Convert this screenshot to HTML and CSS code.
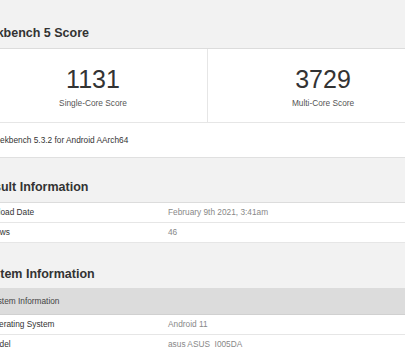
FILE: index.html
```html
<!DOCTYPE html>
<html lang="en">
<head>
    <meta charset="UTF-8">
    <meta name="viewport" content="width=device-width, initial-scale=1.0">
    <title>Geekbench 5 Result</title>
    <link rel="stylesheet" href="styles.css">
</head>
<body>
    <div class="page">
        <h2 class="section-title first">Geekbench 5 Score</h2>
        <div class="card">
            <div class="scores">
                <div class="score">
                    <div class="score-value">1131</div>
                    <div class="score-label">Single-Core Score</div>
                </div>
                <div class="score">
                    <div class="score-value">3729</div>
                    <div class="score-label">Multi-Core Score</div>
                </div>
            </div>
            <div class="version">Geekbench 5.3.2 for Android AArch64</div>
        </div>

        <h2 class="section-title">Result Information</h2>
        <div class="table">
            <div class="row"><span class="name">Upload Date</span><span class="value">February 9th 2021, 3:41am</span></div>
            <div class="row"><span class="name">Views</span><span class="value">46</span></div>
        </div>

        <h2 class="section-title third">System Information</h2>
        <div class="table">
            <div class="row head"><span class="name">System Information</span><span class="value"></span></div>
            <div class="row"><span class="name">Operating System</span><span class="value">Android 11</span></div>
            <div class="row"><span class="name">Model</span><span class="value">asus ASUS_I005DA</span></div>
        </div>
    </div>
</body>
</html>
```

FILE: styles.css
```css
body {
    margin: 0;
    background-color: #f2f2f2;
    font-family: "Liberation Sans", Arial, sans-serif;
    color: #333;
    overflow: hidden;
}

.page {
    margin-left: -22px;
    width: 460px;
}

.section-title {
    margin: 0;
    padding: 22px 0 8px;
    font-size: 12.5px;
    line-height: 14px;
    font-weight: bold;
    color: #333;
}

.section-title.first {
    padding-top: 26px;
    margin-left: -5px;
}

.section-title.third {
    padding-top: 24px;
    padding-bottom: 7px;
}

.card {
    background: #fff;
    border-top: 1px solid #dcdcdc;
    border-bottom: 1px solid #e0e0e0;
    border-left: 1px solid #e0e0e0;
}

.scores {
    display: grid;
    grid-template-columns: 228px 1fr;
    border-bottom: 1px solid #e6e6e6;
}

.score {
    text-align: center;
    padding: 16px 0 13px;
}

.score + .score {
    border-left: 1px solid #e6e6e6;
}

.score-value {
    font-size: 25px;
    line-height: 28px;
    color: #333;
}

.score-label {
    margin-top: 4px;
    font-size: 8.3px;
    line-height: 12px;
    color: #555;
}

.version {
    padding: 0 10px;
    font-size: 8.3px;
    line-height: 34px;
    color: #333;
}

.table {
    background: #fff;
    border-top: 1px solid #dcdcdc;
    border-left: 1px solid #e0e0e0;
}

.row {
    display: grid;
    grid-template-columns: 180px 1fr;
    padding: 0 9px;
    height: 19px;
    line-height: 19px;
    font-size: 8.3px;
    border-bottom: 1px solid #e6e6e6;
}

.row .name {
    color: #333;
}

.row .value {
    color: #888;
}

.row.head {
    height: 25px;
    line-height: 25px;
    background: #dcdcdc;
    border-bottom-color: #d0d0d0;
}

.row.head .name {
    color: #444;
}
```
